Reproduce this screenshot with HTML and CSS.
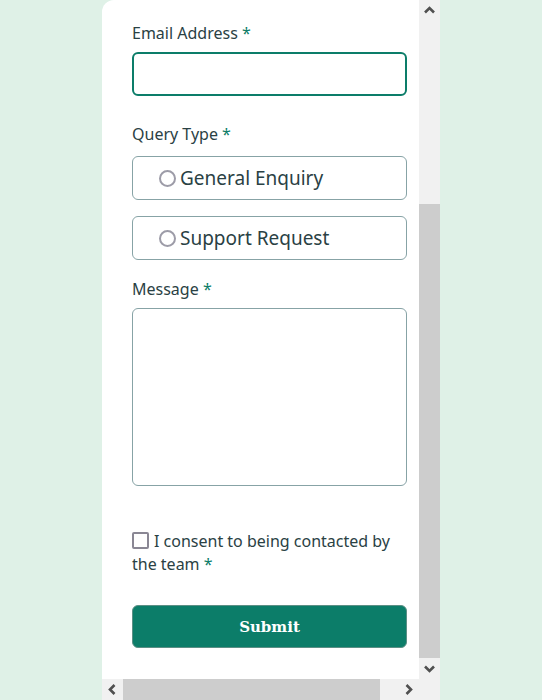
FILE: index.html
```html
<!DOCTYPE html>
<html lang="en">
<head>
<meta charset="utf-8">
<title>Contact Us</title>
<link rel="stylesheet" href="styles.css">
</head>
<body>
<main class="card">
  <div class="viewport" id="viewport">
    <form class="form">
      <h1 class="title">Contact Us</h1>
      <div class="field">
        <label class="label" for="first">First Name <span class="req">*</span></label>
        <input class="input" id="first" type="text">
      </div>
      <div class="field">
        <label class="label" for="last">Last Name <span class="req">*</span></label>
        <input class="input" id="last" type="text">
      </div>
      <div class="field">
        <label class="label" for="email">Email Address <span class="req">*</span></label>
        <input class="input input-focus" id="email" type="email">
      </div>
      <div class="field field-query">
        <span class="label">Query Type <span class="req">*</span></span>
        <div class="options">
          <label class="option"><span class="radio"></span>General Enquiry</label>
          <label class="option"><span class="radio"></span>Support Request</label>
        </div>
      </div>
      <div class="field">
        <label class="label" for="msg">Message <span class="req">*</span></label>
        <textarea class="textarea" id="msg"></textarea>
      </div>
      <label class="consent"><span class="check"></span>I consent to being contacted by the team <span class="req">*</span></label>
      <button class="submit" type="button">Submit</button>
    </form>
  </div>
  <div class="vbar">
    <span class="sb-btn"><svg width="21" height="21" viewBox="0 0 21 21"><path d="M6 12.5 L10.5 8 L15 12.5" fill="none" stroke="#505050" stroke-width="2.6"/></svg></span>
    <div class="vtrack"><div class="vthumb"></div></div>
    <span class="sb-btn"><svg width="21" height="21" viewBox="0 0 21 21"><path d="M6 8.5 L10.5 13 L15 8.5" fill="none" stroke="#505050" stroke-width="2.6"/></svg></span>
  </div>
  <div class="hbar">
    <span class="sb-btn"><svg width="21" height="21" viewBox="0 0 21 21"><path d="M12.5 6 L8 10.5 L12.5 15" fill="none" stroke="#505050" stroke-width="2.6"/></svg></span>
    <div class="htrack"><div class="hthumb"></div></div>
    <span class="sb-btn"><svg width="21" height="21" viewBox="0 0 21 21"><path d="M8.5 6 L13 10.5 L8.5 15" fill="none" stroke="#505050" stroke-width="2.6"/></svg></span>
  </div>
  <div class="corner"></div>
</main>
<script src="script.js"></script>
</body>
</html>
```
FILE: styles.css
```css
html, body {
  margin: 0;
  height: 100%;
}
body {
  background: #dff1e7;
  display: flex;
  justify-content: center;
  font-family: "Noto Sans", sans-serif;
  color: #2a4144;
}
.card {
  width: 338px;
  height: 700px;
  display: grid;
  grid-template-columns: 317px 21px;
  grid-template-rows: 679px 21px;
  background: #ffffff;
  border-radius: 12px 0 0 0;
  overflow: hidden;
}
.viewport {
  overflow: hidden;
}
.vbar,
.hbar,
.corner {
  background: #f1f1f1;
}
.vbar {
  display: flex;
  flex-direction: column;
}
.hbar {
  display: flex;
}
.sb-btn {
  flex: none;
  width: 21px;
  height: 21px;
  display: block;
}
.sb-btn svg {
  display: block;
}
.vtrack {
  flex: 1;
  display: flex;
  flex-direction: column;
  justify-content: flex-end;
}
.vthumb {
  height: 454px;
  background: #cdcdcd;
}
.htrack {
  flex: 1;
  display: flex;
}
.hthumb {
  width: 257px;
  background: #cdcdcd;
}
.form {
  width: 339px;
  box-sizing: border-box;
  padding: 24px 34px 31px 30px;
  display: flex;
  flex-direction: column;
}
.title {
  margin: 0 0 29px;
  font-size: 32px;
  line-height: 40px;
  font-weight: 700;
}
.field {
  display: flex;
  flex-direction: column;
  gap: 7px;
  margin-bottom: 26px;
}
.field-query {
  gap: 10px;
  margin-bottom: 17px;
}
.label {
  font-size: 16px;
  line-height: 24px;
}
.req {
  color: #0c7d69;
}
.input {
  height: 44px;
  box-sizing: border-box;
  border: 1px solid #87a3a6;
  border-radius: 6px;
  margin: 0;
  font: inherit;
}
.input-focus {
  border: 2px solid #0c7d69;
  outline: none;
}
.options {
  display: flex;
  flex-direction: column;
  gap: 16px;
}
.option {
  height: 44px;
  box-sizing: border-box;
  border: 1px solid #87a3a6;
  border-radius: 6px;
  display: flex;
  align-items: center;
  gap: 4px;
  padding-left: 26px;
  font-size: 19px;
}
.radio {
  width: 13px;
  height: 13px;
  border: 2px solid #9d9ca8;
  border-radius: 50%;
}
.textarea {
  height: 178px;
  box-sizing: border-box;
  border: 1px solid #87a3a6;
  border-radius: 6px;
  margin: 0;
  resize: none;
  font: inherit;
}
.consent {
  display: block;
  font-size: 16px;
  line-height: 23px;
  margin-top: 18px;
}
.check {
  display: inline-block;
  box-sizing: border-box;
  width: 17px;
  height: 17px;
  border: 2px solid #8a8794;
  border-radius: 2px;
  margin-right: 5px;
  vertical-align: -2px;
}
.submit {
  margin-top: 29px;
  height: 43px;
  border: 1px solid #5c8f85;
  border-radius: 6px;
  background: #0c7d69;
  color: #ffffff;
  font-family: "DejaVu Serif", serif;
  font-weight: 700;
  font-size: 15px;
}
```
FILE: script.js
```js
window.addEventListener('load', function () {
  var viewport = document.getElementById('viewport');
  viewport.scrollTop = viewport.scrollHeight;
});
```
